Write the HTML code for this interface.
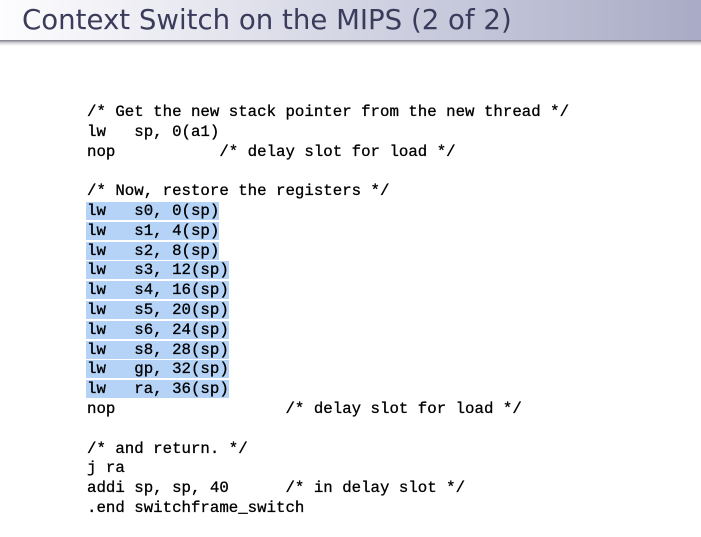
<!DOCTYPE html>
<html><head><meta charset="utf-8"><style>
html,body{margin:0;padding:0;background:#fff;width:701px;height:537px;overflow:hidden;position:relative}
.title{position:absolute;left:0;top:0;width:701px;height:40px;background:linear-gradient(90deg,#fdfdfe 0%,#e6e6ef 30%,#c6c8db 65%,#a9abc6 100%);}
.title span{position:absolute;left:22px;top:3px;font-family:"DejaVu Sans","Liberation Sans",sans-serif;font-size:27.6px;color:#3b3b5c;letter-spacing:0px}
.shadow{position:absolute;left:0;top:40px;width:701px;height:6px;background:linear-gradient(#7a7a84,#d8d8de 50%,#fff)}
pre{position:absolute;left:87px;top:103px;margin:0;font-family:"Liberation Mono",monospace;font-size:15.75px;line-height:19.8px;color:#000;-webkit-text-stroke:0.3px #000}
.h{background:#b5d3f7;margin-left:-1px;padding-left:1px}
</style></head><body>
<div class="title"><span>Context Switch on the MIPS (2 of 2)</span></div>
<div class="shadow"></div>
<pre>/* Get the new stack pointer from the new thread */
lw   sp, 0(a1)
nop           /* delay slot for load */

/* Now, restore the registers */
<span class="h">lw   s0, 0(sp)</span>
<span class="h">lw   s1, 4(sp)</span>
<span class="h">lw   s2, 8(sp)</span>
<span class="h">lw   s3, 12(sp)</span>
<span class="h">lw   s4, 16(sp)</span>
<span class="h">lw   s5, 20(sp)</span>
<span class="h">lw   s6, 24(sp)</span>
<span class="h">lw   s8, 28(sp)</span>
<span class="h">lw   gp, 32(sp)</span>
<span class="h">lw   ra, 36(sp)</span>
nop                  /* delay slot for load */

/* and return. */
j ra
addi sp, sp, 40      /* in delay slot */
.end switchframe_switch</pre>
</body></html>
